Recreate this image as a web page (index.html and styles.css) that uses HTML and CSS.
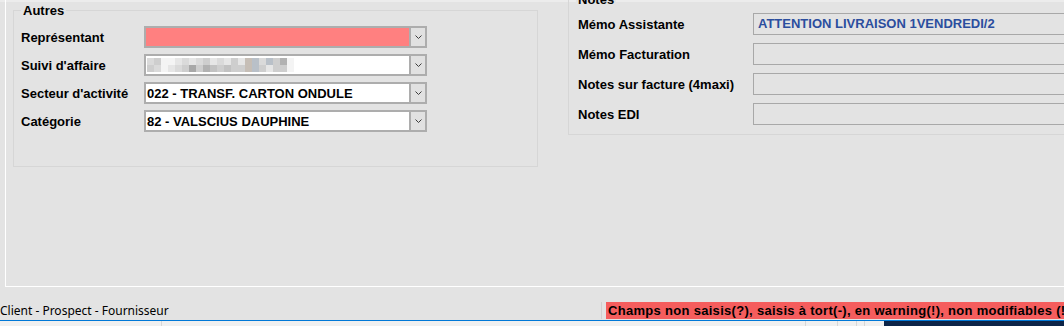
FILE: index.html
```html
<!DOCTYPE html>
<html lang="fr">
<head>
    <meta charset="UTF-8">
    <title>Fiche tiers - Autres / Notes</title>
    <link rel="stylesheet" href="styles.css">
</head>
<body>
    <div class="page">
        <div class="workspace">
            <div class="group group-autres">
                <div class="legend">Autres</div>
                <div class="row">
                    <label>Représentant</label>
                    <div class="combo required">
                        <span class="value"></span>
                        <span class="btn"><svg width="7" height="4" viewBox="0 0 7 4"><polyline points="0.5,0.5 3.5,3.5 6.5,0.5" fill="none" stroke="#3c3c3c" stroke-width="1"/></svg></span>
                    </div>
                </div>
                <div class="row">
                    <label>Suivi d'affaire</label>
                    <div class="combo">
                        <span class="value">
                            <span class="blur">
                                <i class="g2"></i><i class="g3"></i><i class="g0"></i><i class="g0"></i><i class="g1"></i><i class="g2"></i><i class="g1"></i><i class="g2"></i><i class="g3"></i><i class="g1"></i><i class="g2"></i><i class="g1"></i><i class="g3"></i><i class="g1"></i><i class="br"></i><i class="bl"></i><i class="g2"></i><i class="bl"></i><i class="g3"></i><i class="g5"></i><i class="g0"></i>
                                <i class="g3"></i><i class="g2"></i><i class="g0"></i><i class="g1"></i><i class="g2"></i><i class="g3"></i><i class="g6"></i><i class="g3"></i><i class="g5"></i><i class="g4"></i><i class="g3"></i><i class="g4"></i><i class="g3"></i><i class="g3"></i><i class="br"></i><i class="bl"></i><i class="g3"></i><i class="g1"></i><i class="g3"></i><i class="g3"></i><i class="g0"></i>
                            </span>
                        </span>
                        <span class="btn"><svg width="7" height="4" viewBox="0 0 7 4"><polyline points="0.5,0.5 3.5,3.5 6.5,0.5" fill="none" stroke="#3c3c3c" stroke-width="1"/></svg></span>
                    </div>
                </div>
                <div class="row">
                    <label>Secteur d'activité</label>
                    <div class="combo">
                        <span class="value">022 - TRANSF. CARTON ONDULE</span>
                        <span class="btn"><svg width="7" height="4" viewBox="0 0 7 4"><polyline points="0.5,0.5 3.5,3.5 6.5,0.5" fill="none" stroke="#3c3c3c" stroke-width="1"/></svg></span>
                    </div>
                </div>
                <div class="row">
                    <label>Catégorie</label>
                    <div class="combo">
                        <span class="value">82 - VALSCIUS DAUPHINE</span>
                        <span class="btn"><svg width="7" height="4" viewBox="0 0 7 4"><polyline points="0.5,0.5 3.5,3.5 6.5,0.5" fill="none" stroke="#3c3c3c" stroke-width="1"/></svg></span>
                    </div>
                </div>
            </div>

            <div class="group group-notes">
                <div class="legend">Notes</div>
                <div class="row">
                    <label>Mémo Assistante</label>
                    <div class="memo">ATTENTION LIVRAISON 1VENDREDI/2</div>
                </div>
                <div class="row">
                    <label>Mémo Facturation</label>
                    <div class="memo"></div>
                </div>
                <div class="row">
                    <label>Notes sur facture (4maxi)</label>
                    <div class="memo"></div>
                </div>
                <div class="row">
                    <label>Notes EDI</label>
                    <div class="memo"></div>
                </div>
            </div>
        </div>

        <div class="statusbar">
            <div class="status-left">Client - Prospect - Fournisseur</div>
            <div class="status-sep"></div>
            <div class="status-warn">Champs non saisis(?), saisis à tort(-), en warning(!), non modifiables (!)</div>
        </div>

        <div class="taskbar">
            <div class="tb-cell w1"></div>
            <div class="tb-cell w2"></div>
            <div class="tb-cell w3"></div>
            <div class="tb-cell w4"></div>
            <div class="tb-cell w5"></div>
            <div class="tb-cell w6"></div>
            <div class="tb-tray"></div>
        </div>
    </div>
</body>
</html>
```

FILE: styles.css
```css
body {
    margin: 0;
    width: 1064px;
    height: 326px;
    overflow: hidden;
    background: linear-gradient(#ececec 0 2px, #e3e3e3 2px);
    font-family: "Liberation Sans", Arial, sans-serif;
    font-size: 13px;
    color: #000;
}
.page { display: flex; flex-direction: column; height: 326px; }
.page > * { flex-shrink: 0; }

/* zone de travail */
.workspace {
    height: 286px;
    margin-left: 5px;
    padding-left: 7px;
    border-left: 1px solid #fff;
    border-bottom: 1px solid #fff;
    display: flex;
    align-items: flex-start;
    overflow: hidden;
}
.group {
    position: relative;
    flex-shrink: 0;
    box-sizing: border-box;
    border: 1px solid #d6d6d6;
    display: flex;
    flex-direction: column;
}
.legend {
    position: absolute;
    top: -8px;
    left: 7px;
    padding: 0 2px;
    background: #e3e3e3;
    font-weight: bold;
    line-height: 15px;
}
.row { display: flex; align-items: center; height: 22px; }
.row label { font-weight: bold; flex-shrink: 0; }

.group-autres { margin-top: 10px; width: 525px; height: 157px; padding: 15px 0 0 7px; gap: 6px; }
.group-autres label { width: 123px; }

.group-notes { margin: -1px 0 0 30px; width: 560px; height: 136px; padding: 13px 0 0 9px; gap: 8px; }
.group-notes label { width: 175px; }

/* listes deroulantes */
.combo {
    display: flex;
    width: 283px;
    height: 22px;
    box-sizing: border-box;
    border: 2px solid #adadad;
    background: #fff;
}
.combo.required .value { background: #ff8080; }
.combo .value {
    flex: 1;
    display: flex;
    align-items: center;
    padding-left: 1px;
    font-weight: bold;
    white-space: nowrap;
    overflow: hidden;
}
.combo .btn {
    width: 14px;
    border-left: 2px solid #adadad;
    background: #e1e1e1;
    display: flex;
    align-items: center;
    justify-content: center;
}

.blur { display: grid; grid-template-columns: repeat(21, 7px); grid-auto-rows: 7px; }
.blur i { display: block; }
.g0 { background: #f4f4f4; }
.g1 { background: #e6e6e6; }
.g2 { background: #dadada; }
.g3 { background: #cecece; }
.g4 { background: #c2c2c2; }
.g5 { background: #b2b2b2; }
.g6 { background: #a8a8a8; }
.bl { background: #b9c0c8; }
.br { background: #c6beb6; }

/* memos (lecture seule) */
.memo {
    flex: 1;
    height: 22px;
    box-sizing: border-box;
    border: 1px solid #a8a8a8;
    border-right: none;
    padding-left: 4px;
    line-height: 20px;
    font-weight: bold;
    color: #2b4e9e;
    white-space: nowrap;
}

/* barre d'etat */
.statusbar {
    height: 33px;
    box-sizing: border-box;
    padding-bottom: 1px;
    display: flex;
    align-items: flex-end;
    white-space: nowrap;
}
.status-left {
    width: 601px;
    font-family: "Noto Sans", sans-serif;
    font-size: 12px;
    line-height: 17px;
}
.status-sep { width: 1px; height: 17px; background: #d0d0d0; }
.status-warn {
    margin-left: 4px;
    flex: 1;
    padding-left: 2px;
    height: 17px;
    line-height: 17px;
    background: #f55d5d;
    font-weight: bold;
    letter-spacing: 0.3px;
    overflow: hidden;
}

.taskbar { height: 20px; border-top: 1px solid #0078d7; background: #f0f0f0; display: flex; }
.tb-cell { box-sizing: border-box; border-right: 1px solid #d7d7d7; }
.w1 { width: 162px; }
.w2 { width: 644px; }
.w3 { width: 32px; }
.w4 { width: 19px; }
.w5 { width: 8px; }
.w6 { width: 19px; border-right: none; }
.tb-tray { flex: 1; background: #0d2447; }
```
